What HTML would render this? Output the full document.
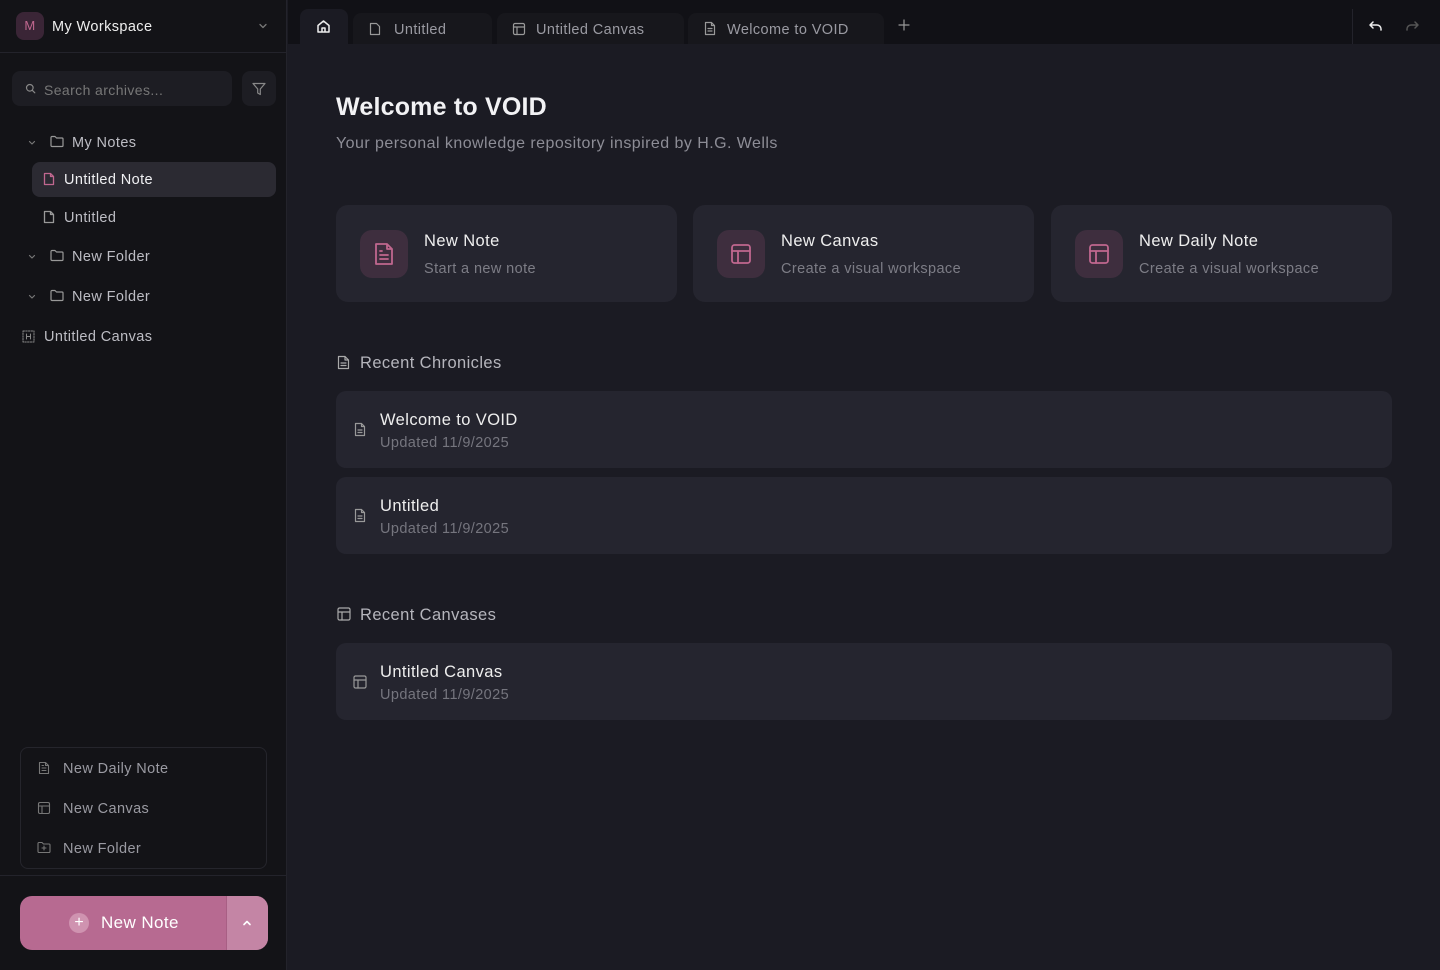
<!DOCTYPE html>
<html><head><meta charset="utf-8"><style>
*{box-sizing:border-box;margin:0;padding:0}
body{width:1440px;height:970px;overflow:hidden;background:#1b1b23;font-family:"Liberation Sans",sans-serif;color:#e6e6ea;position:relative;letter-spacing:0.4px}
.a{position:absolute}
div.a{margin-top:1px}
svg{position:absolute;fill:none;stroke-linecap:round;stroke-linejoin:round}
#side{left:0;top:0;width:287px;height:970px;background:#131317;border-right:1px solid #23232b;margin-top:0 !important}
.t{font-size:14.5px;color:#bdbdc4;white-space:nowrap}
.card{background:#25252f;border-radius:12px;margin-top:0 !important}
.ib{width:48px;height:48px;border-radius:12px;background:#3e2e3e;margin-top:0 !important}
.bg{margin-top:0 !important}
</style></head><body>
<div id="side" class="a">
  <div class="a bg" style="left:16px;top:12px;width:28px;height:28px;border-radius:8px;background:#3a2536;color:#c0678f;font-size:13px;text-align:center;line-height:28px">M</div>
  <div class="a" style="left:52px;top:18px;font-size:14.5px;color:#eee">My Workspace</div>
  <svg style="left:257px;top:20px" width="12" height="12" viewBox="0 0 12 12" stroke="#777" stroke-width="1.3"><path d="M3 4.5l3 3 3-3"/></svg>
  <div class="a bg" style="left:0;top:52px;width:287px;height:1px;background:#23232b"></div>
  <div class="a bg" style="left:12px;top:71px;width:220px;height:35px;border-radius:8px;background:#1d1d23"></div>
  <svg style="left:25px;top:83px" width="11" height="11" viewBox="0 0 11 11" stroke="#888" stroke-width="1.2"><circle cx="4.8" cy="4.8" r="3.3"/><path d="M7.3 7.3l2.5 2.5"/></svg>
  <div class="a t" style="left:44px;top:81px;color:#777;font-size:14px">Search archives...</div>
  <div class="a bg" style="left:242px;top:71px;width:34px;height:35px;border-radius:8px;background:#1d1d23"></div>
  <svg style="left:251px;top:81px" width="16" height="16" viewBox="0 0 16 16" stroke="#888" stroke-width="1.2"><path d="M2 2.5h12l-4.7 5.5v5.5l-2.6-1.5v-4z"/></svg>
  <svg style="left:27px;top:138px" width="10" height="10" viewBox="0 0 10 10" stroke="#777" stroke-width="1.2"><path d="M2.5 3.5l2.5 2.5 2.5-2.5"/></svg>
  <svg style="left:50px;top:135px" width="14" height="13" viewBox="0 0 14 13" stroke="#999" stroke-width="1.2"><path d="M1 2.5a1 1 0 011-1h3l1.5 1.5h5.5a1 1 0 011 1v6.5a1 1 0 01-1 1h-10a1 1 0 01-1-1z"/></svg>
  <div class="a t" style="left:72px;top:134px">My Notes</div>
  <div class="a bg" style="left:32px;top:162px;width:244px;height:35px;border-radius:8px;background:#2b2a32"></div>
  <svg style="left:43px;top:172px" width="12" height="14" viewBox="0 0 12 14" stroke="#c0678f" stroke-width="1.3"><path d="M1.5 1.5h6l3 3v8h-9z M7.5 1.5v3h3"/></svg>
  <div class="a t" style="left:64px;top:171px;color:#f0f0f3">Untitled Note</div>
  <svg style="left:43px;top:210px" width="12" height="14" viewBox="0 0 12 14" stroke="#999" stroke-width="1.3"><path d="M1.5 1.5h6l3 3v8h-9z M7.5 1.5v3h3"/></svg>
  <div class="a t" style="left:64px;top:209px">Untitled</div>
  <svg style="left:27px;top:252px" width="10" height="10" viewBox="0 0 10 10" stroke="#777" stroke-width="1.2"><path d="M2.5 3.5l2.5 2.5 2.5-2.5"/></svg>
  <svg style="left:50px;top:249px" width="14" height="13" viewBox="0 0 14 13" stroke="#999" stroke-width="1.2"><path d="M1 2.5a1 1 0 011-1h3l1.5 1.5h5.5a1 1 0 011 1v6.5a1 1 0 01-1 1h-10a1 1 0 01-1-1z"/></svg>
  <div class="a t" style="left:72px;top:248px">New Folder</div>
  <svg style="left:27px;top:292px" width="10" height="10" viewBox="0 0 10 10" stroke="#777" stroke-width="1.2"><path d="M2.5 3.5l2.5 2.5 2.5-2.5"/></svg>
  <svg style="left:50px;top:289px" width="14" height="13" viewBox="0 0 14 13" stroke="#999" stroke-width="1.2"><path d="M1 2.5a1 1 0 011-1h3l1.5 1.5h5.5a1 1 0 011 1v6.5a1 1 0 01-1 1h-10a1 1 0 01-1-1z"/></svg>
  <div class="a t" style="left:72px;top:288px">New Folder</div>
  <svg style="left:22px;top:330px" width="13" height="13" viewBox="0 0 13 13" stroke="#888" stroke-width="1" stroke-dasharray="1.5 1.2"><rect x="1" y="1" width="11" height="11"/><path d="M4.5 4v5 M8.5 4v5 M4.5 6.5h4" stroke-dasharray="none"/></svg>
  <div class="a t" style="left:44px;top:328px">Untitled Canvas</div>
  <div class="a bg" style="left:20px;top:747px;width:247px;height:122px;border:1px solid #25252c;border-radius:8px"></div>
  <svg style="left:38px;top:761px" width="12" height="14" viewBox="0 0 12 14" stroke="#777" stroke-width="1.1"><path d="M1.5 1.5h6l3 3v8h-9z M7.5 1.5v3h3 M4 7h4 M4 9.5h4 M4 4.5h1.5"/></svg>
  <div class="a t" style="left:63px;top:760px;color:#9a9aa2">New Daily Note</div>
  <svg style="left:37px;top:801px" width="14" height="14" viewBox="0 0 14 14" stroke="#777" stroke-width="1.1"><rect x="1.5" y="1.5" width="11" height="11" rx="1.5"/><path d="M1.5 5h11 M5 5v7.5"/></svg>
  <div class="a t" style="left:63px;top:800px;color:#9a9aa2">New Canvas</div>
  <svg style="left:37px;top:841px" width="14" height="13" viewBox="0 0 14 13" stroke="#777" stroke-width="1.1"><path d="M1 2.5a1 1 0 011-1h3l1.5 1.5h5.5a1 1 0 011 1v6.5a1 1 0 01-1 1h-10a1 1 0 01-1-1z M7 5v4 M5 7h4"/></svg>
  <div class="a t" style="left:63px;top:840px;color:#9a9aa2">New Folder</div>
  <div class="a bg" style="left:0;top:875px;width:287px;height:1px;background:#23232b"></div>
  <div class="a bg" style="left:20px;top:896px;width:248px;height:54px;border-radius:12px;background:#b76a91;overflow:hidden">
    <div class="a bg" style="left:206px;top:0;width:42px;height:54px;background:#c485a5;border-left:1px solid #a85f84"></div>
  </div>
  <div class="a bg" style="left:69px;top:913px;width:20px;height:20px;border-radius:50%;background:#cf93b0;color:#fff;text-align:center;line-height:19px;font-size:16px;letter-spacing:0">+</div>
  <div class="a" style="left:101px;top:912px;font-size:17px;color:#fff">New Note</div>
  <svg style="left:241px;top:917px" width="12" height="12" viewBox="0 0 12 12" stroke="#fff" stroke-width="1.6"><path d="M3 7.5l3-3 3 3"/></svg>
</div>
<!-- topbar -->
<div class="a bg" style="left:288px;top:0;width:1152px;height:44px;background:#111116"></div>
<div class="a bg" style="left:300px;top:9px;width:48px;height:35px;background:#1b1b23;border-radius:8px 8px 0 0"></div>
<svg style="left:316px;top:19px" width="15" height="15" viewBox="0 0 15 15" stroke="#eee" stroke-width="1.5"><path d="M2 6.5l5.5-4.5 5.5 4.5v6.5h-11z M6 13v-4h3v4"/></svg>
<div class="a bg" style="left:353px;top:13px;width:139px;height:31px;background:#17171c;border-radius:8px 8px 0 0"></div>
<svg style="left:369px;top:22px" width="12" height="14" viewBox="0 0 12 14" stroke="#999" stroke-width="1.2"><path d="M1.5 1.5h6l3 3v8h-9z"/></svg>
<div class="a t" style="left:394px;top:21px;color:#9a9aa2">Untitled</div>
<div class="a bg" style="left:497px;top:13px;width:187px;height:31px;background:#17171c;border-radius:8px 8px 0 0"></div>
<svg style="left:512px;top:22px" width="14" height="14" viewBox="0 0 14 14" stroke="#999" stroke-width="1.2"><rect x="1.5" y="1.5" width="11" height="11" rx="1.5"/><path d="M1.5 5h11 M5 5v7.5"/></svg>
<div class="a t" style="left:536px;top:21px;color:#9a9aa2">Untitled Canvas</div>
<div class="a bg" style="left:688px;top:13px;width:196px;height:31px;background:#17171c;border-radius:8px 8px 0 0"></div>
<svg style="left:704px;top:21px" width="12" height="15" viewBox="0 0 12 15" stroke="#999" stroke-width="1.2"><path d="M1.5 1.5h6l3 3v9h-9z M7.5 1.5v3h3 M4 7.5h4 M4 10h4"/></svg>
<div class="a t" style="left:727px;top:21px;color:#9a9aa2">Welcome to VOID</div>
<svg style="left:897px;top:18px" width="14" height="14" viewBox="0 0 14 14" stroke="#999" stroke-width="1.2"><path d="M7 2v10 M2 7h10"/></svg>
<div class="a bg" style="left:1352px;top:9px;width:1px;height:35px;background:#23232b"></div>
<svg style="left:1368px;top:19px" width="16" height="14" viewBox="0 0 16 14" stroke="#eee" stroke-width="1.5"><path d="M5 3l-3 3 3 3 M2 6h7a4 4 0 014 4v1"/></svg>
<svg style="left:1404px;top:19px" width="16" height="14" viewBox="0 0 16 14" stroke="#555" stroke-width="1.5"><path d="M11 3l3 3-3 3 M14 6h-7a4 4 0 00-4 4v1"/></svg>
<!-- main -->
<div class="a" style="left:336px;top:92px;font-size:25px;font-weight:bold;color:#f2f2f4;letter-spacing:0.2px">Welcome to VOID</div>
<div class="a" style="left:336px;top:134px;font-size:16px;color:#8d8d96;letter-spacing:0.45px">Your personal knowledge repository inspired by H.G. Wells</div>

<div class="a card" style="left:336px;top:205px;width:341px;height:97px"></div>
<div class="a card" style="left:693px;top:205px;width:341px;height:97px"></div>
<div class="a card" style="left:1051px;top:205px;width:341px;height:97px"></div>
<div class="a ib" style="left:360px;top:230px"></div>
<div class="a ib" style="left:717px;top:230px"></div>
<div class="a ib" style="left:1075px;top:230px"></div>
<svg style="left:374px;top:242px" width="20" height="24" viewBox="0 0 20 24" stroke="#c0678f" stroke-width="1.8"><path d="M2 2h11l5 5v15h-16z M13 2v5h5 M6 13h8 M6 17h8 M6 9h2"/></svg>
<svg style="left:731px;top:244px" width="20" height="20" viewBox="0 0 20 20" stroke="#c0678f" stroke-width="1.8"><rect x="1" y="1" width="18" height="18" rx="2.5"/><path d="M1 7h18 M7 7v12"/></svg>
<svg style="left:1089px;top:244px" width="20" height="20" viewBox="0 0 20 20" stroke="#c0678f" stroke-width="1.8"><rect x="1" y="1" width="18" height="18" rx="2.5"/><path d="M1 7h18 M7 7v12"/></svg>
<div class="a" style="left:424px;top:231px;font-size:16.5px;color:#eee">New Note</div>
<div class="a" style="left:424px;top:260px;font-size:14.5px;color:#7d7d86">Start a new note</div>
<div class="a" style="left:781px;top:231px;font-size:16.5px;color:#eee">New Canvas</div>
<div class="a" style="left:781px;top:260px;font-size:14.5px;color:#7d7d86">Create a visual workspace</div>
<div class="a" style="left:1139px;top:231px;font-size:16.5px;color:#eee">New Daily Note</div>
<div class="a" style="left:1139px;top:260px;font-size:14.5px;color:#7d7d86">Create a visual workspace</div>

<svg style="left:337px;top:355px" width="13" height="15" viewBox="0 0 13 15" stroke="#aaa" stroke-width="1.2"><path d="M1.5 1.5h6.5l3.5 3.5v8.5h-10z M8 1.5v3.5h3.5 M4 8h5 M4 10.5h5"/></svg>
<div class="a" style="left:360px;top:353px;font-size:16.5px;color:#b5b5bc">Recent Chronicles</div>

<div class="a card" style="left:336px;top:391px;width:1056px;height:77px;border-radius:10px"></div>
<svg style="left:354px;top:422px" width="12" height="15" viewBox="0 0 12 15" stroke="#999" stroke-width="1.2"><path d="M1.5 1.5h6l3 3v9h-9z M7.5 1.5v3h3 M4 8h4 M4 10.5h4"/></svg>
<div class="a" style="left:380px;top:410px;font-size:16.5px;color:#eee">Welcome to VOID</div>
<div class="a" style="left:380px;top:434px;font-size:14.5px;color:#75757e">Updated 11/9/2025</div>

<div class="a card" style="left:336px;top:477px;width:1056px;height:77px;border-radius:10px"></div>
<svg style="left:354px;top:508px" width="12" height="15" viewBox="0 0 12 15" stroke="#999" stroke-width="1.2"><path d="M1.5 1.5h6l3 3v9h-9z M7.5 1.5v3h3 M4 8h4 M4 10.5h4"/></svg>
<div class="a" style="left:380px;top:496px;font-size:16.5px;color:#eee">Untitled</div>
<div class="a" style="left:380px;top:520px;font-size:14.5px;color:#75757e">Updated 11/9/2025</div>

<svg style="left:337px;top:607px" width="14" height="14" viewBox="0 0 14 14" stroke="#aaa" stroke-width="1.2"><rect x="1" y="1" width="12" height="12" rx="1.5"/><path d="M1 5h12 M5 5v8"/></svg>
<div class="a" style="left:360px;top:605px;font-size:16.5px;color:#b5b5bc">Recent Canvases</div>

<div class="a card" style="left:336px;top:643px;width:1056px;height:77px;border-radius:10px"></div>
<svg style="left:353px;top:675px" width="14" height="14" viewBox="0 0 14 14" stroke="#999" stroke-width="1.2"><rect x="1" y="1" width="12" height="12" rx="1.5"/><path d="M1 5h12 M5 5v8"/></svg>
<div class="a" style="left:380px;top:662px;font-size:16.5px;color:#eee">Untitled Canvas</div>
<div class="a" style="left:380px;top:686px;font-size:14.5px;color:#75757e">Updated 11/9/2025</div>
</body></html>
